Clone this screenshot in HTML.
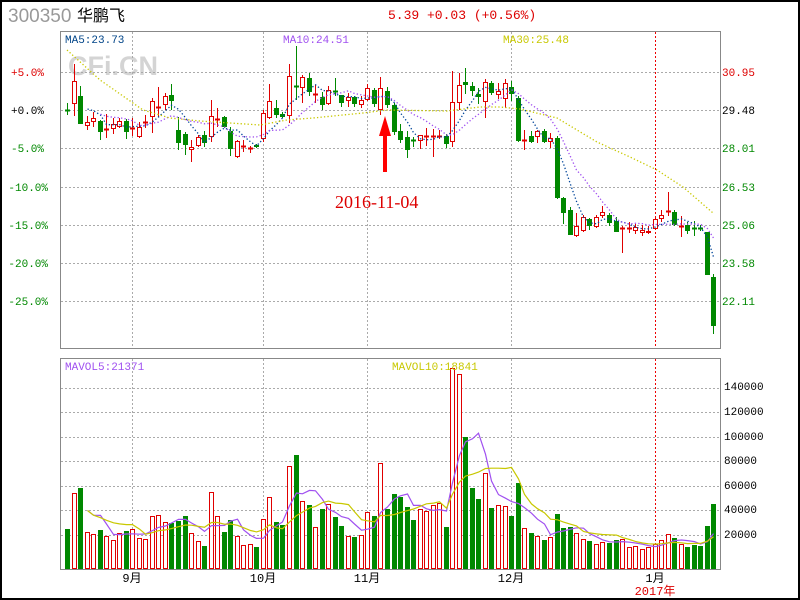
<!DOCTYPE html>
<html><head><meta charset="utf-8"><style>
html,body{margin:0;padding:0;background:#fff;}
#w{position:relative;width:800px;height:600px;overflow:hidden;}
svg text{font-family:"Liberation Mono","WenQuanYi Zen Hei",monospace;}
</style></head><body><div id="w">
<svg id="s" width="800" height="600" xmlns="http://www.w3.org/2000/svg">
<rect x="0" y="0" width="800" height="600" fill="#fff"/>
<rect x="1" y="1" width="798" height="598" fill="none" stroke="#000" stroke-width="2"/>
<text x="8" y="22" font-size="19" fill="#999" style="font-family:'Liberation Sans',sans-serif">300350</text>
<text x="77" y="21" font-size="16" fill="#000" style="font-family:'Liberation Sans','WenQuanYi Zen Hei',sans-serif">华鹏飞</text>
<text x="388" y="19" font-size="13" fill="#d00">5.39 +0.03 (+0.56%)</text>
<text x="68" y="75" font-size="27" font-weight="bold" fill="#d4d4d4" style="font-family:'Liberation Sans',sans-serif">CFi.CN</text>
<g id="grid"></g>
<rect x="60.5" y="31.5" width="660" height="317" fill="none" stroke="#888"/>
<rect x="60.5" y="358.5" width="660" height="211" fill="none" stroke="#888"/>
<g id="chart"></g>
<text x="65" y="43" font-size="11" fill="#004488">MA5:23.73</text>
<text x="283" y="43" font-size="11" fill="#a050f0">MA10:24.51</text>
<text x="503" y="43" font-size="11" fill="#c8c800">MA30:25.48</text>
<text x="65" y="370" font-size="11" fill="#a050f0">MAVOL5:21371</text>
<text x="392" y="370" font-size="11" fill="#c8c800">MAVOL10:18841</text>
<g font-size="11" text-anchor="end">
<text x="44" y="76" fill="#d00">+5.0%</text>
<text x="44" y="114" fill="#000">+0.0%</text>
<text x="44" y="152" fill="#080">-5.0%</text>
<text x="48" y="191" fill="#080">-10.0%</text>
<text x="48" y="229" fill="#080">-15.0%</text>
<text x="48" y="267" fill="#080">-20.0%</text>
<text x="48" y="305" fill="#080">-25.0%</text>
</g>
<g font-size="11">
<text x="722" y="76" fill="#d00">30.95</text>
<text x="722" y="114" fill="#000">29.48</text>
<text x="722" y="152" fill="#080">28.01</text>
<text x="722" y="191" fill="#080">26.53</text>
<text x="722" y="229" fill="#080">25.06</text>
<text x="722" y="267" fill="#080">23.58</text>
<text x="722" y="305" fill="#080">22.11</text>
<text x="724" y="390" fill="#000">140000</text>
<text x="724" y="415" fill="#000">120000</text>
<text x="724" y="440" fill="#000">100000</text>
<text x="724" y="464" fill="#000">80000</text>
<text x="724" y="489" fill="#000">60000</text>
<text x="724" y="513" fill="#000">40000</text>
<text x="724" y="538" fill="#000">20000</text>
</g>
<g font-size="12" text-anchor="middle" style="font-family:'Liberation Sans','WenQuanYi Zen Hei',sans-serif">
<text x="132" y="582">9月</text>
<text x="263" y="582">10月</text>
<text x="367" y="582">11月</text>
<text x="511" y="582">12月</text>
<text x="655" y="582">1月</text>
<text x="655" y="595" fill="#d00">2017年</text>
</g>
<path d="M385 172 L385 132" stroke="#f00" stroke-width="4"/>
<path d="M385 116 L379 136 L391 136 Z" fill="#f00"/>
<text x="335" y="208" font-size="18" fill="#d00" style="font-family:'Liberation Serif',serif">2016-11-04</text>
</svg>
<script>
var C=[[110,110,103,115],[103,81,64,116],[96,123,86,123],[125,122,116,130],[121,118,112,127],[121,131,120,140],[129,129,114,138],[128,124,118,134],[126,121,118,128],[121,131,119,139],[128,128,118,136],[136,127,122,138],[122,122,115,128],[116,101,98,133],[107,107,87,117],[104,96,93,110],[95,100,84,110],[130,142,117,150],[134,144,132,155],[149,147,140,162],[145,137,135,147],[135,142,131,147],[136,116,100,142],[119,119,108,127],[117,126,116,128],[131,148,127,156],[156,141,140,158],[146,146,140,152],[148,148,146,153],[145,146,144,148],[138,113,110,142],[117,101,84,119],[108,114,100,118],[114,116,112,118],[115,76,64,123],[86,86,46,100],[87,77,75,103],[78,91,73,96],[94,94,85,103],[97,104,92,110],[103,90,86,105],[91,91,78,96],[95,102,95,107],[100,97,93,107],[97,103,96,107],[104,100,96,108],[99,88,84,101],[90,103,88,107],[109,88,77,115],[91,104,87,108],[105,131,103,135],[131,139,124,143],[137,149,131,158],[140,140,137,147],[140,135,135,149],[136,136,128,146],[136,136,129,157],[136,136,130,139],[136,143,134,148],[141,102,71,147],[102,85,73,110],[82,84,68,94],[86,90,82,96],[94,96,88,104],[101,82,79,118],[83,92,81,95],[94,91,83,99],[98,83,79,108],[87,93,81,101],[98,140,96,142],[140,140,130,150],[136,141,131,143],[136,131,130,143],[131,141,129,143],[141,138,133,148],[138,197,136,199],[198,212,197,224],[210,234,207,235],[235,226,213,237],[230,217,215,232],[219,225,218,230],[226,217,215,228],[215,212,206,218],[215,222,213,226],[221,231,217,232],[228,228,226,253],[228,228,222,233],[230,227,223,234],[232,230,225,236],[232,231,226,234],[228,219,218,229],[218,215,210,222],[211,211,192,216],[212,224,210,226],[226,226,216,237],[225,230,222,234],[228,228,221,236],[228,228,225,231],[232,274,232,274],[277,325,274,334]];
var V=[529,493,488,532,534,530,536,540,533,531,529,538,539,516,515,522,523,521,516,533,541,546,492,516,532,520,536,545,544,547,519,497,522,525,466,455,501,505,527,509,504,517,526,536,537,535,512,516,463,509,494,497,507,520,509,511,505,503,527,368,374,437,488,499,473,508,505,506,516,483,528,533,536,540,537,514,528,527,533,539,541,544,542,543,540,539,547,546,549,547,544,540,534,538,544,547,545,546,526,504];
var NS="http://www.w3.org/2000/svg",ch=document.getElementById('chart'),gr=document.getElementById('grid');
function el(t,a,p){var e=document.createElementNS(NS,t);for(var k in a)e.setAttribute(k,a[k]);(p||ch).appendChild(e);return e;}
[72,110,148,187,225,263,301].forEach(function(y){el('line',{x1:61,x2:720,y1:y+.5,y2:y+.5,stroke:'#aaa','stroke-dasharray':'2,2'},gr);});
[388,412,437,461,486,510,535].forEach(function(y){el('line',{x1:61,x2:720,y1:y+.5,y2:y+.5,stroke:'#aaa','stroke-dasharray':'2,2'},gr);});
[132,263,367,511].forEach(function(x){el('line',{x1:x+.5,x2:x+.5,y1:32,y2:348,stroke:'#aaa','stroke-dasharray':'2,2'},gr);el('line',{x1:x+.5,x2:x+.5,y1:359,y2:569,stroke:'#aaa','stroke-dasharray':'2,2'},gr);});
el('line',{x1:655.5,x2:655.5,y1:32,y2:348,stroke:'#e00','stroke-dasharray':'2,2'},gr);
el('line',{x1:655.5,x2:655.5,y1:359,y2:569,stroke:'#e00','stroke-dasharray':'2,2'},gr);
var R='#e00000',G='#008800';
function X(i){return Math.round(67+6.53*i);}
var cl=[];
C.forEach(function(c,i){var x=X(i),o=c[0],cc=c[1],red=cc<o||(cc==o&&i!=0&&i!=53&&i!=41&&i!=35&&!(i>=95&&i<=97)&&i!=29);
 var col=red?R:G;cl.push(cc);
 var t=Math.min(o,cc),b=Math.max(o,cc);
 el('line',{x1:x+.5,x2:x+.5,y1:c[2],y2:c[3],stroke:col});
 if(b-t<1){el('line',{x1:x-2,x2:x+3,y1:t+.5,y2:t+.5,stroke:col,'stroke-width':2});}
 else if(red)el('rect',{x:x-1.5,y:t+.5,width:4,height:b-t,fill:'#fff',stroke:col});
 else el('rect',{x:x-2,y:t,width:5,height:b-t+1,fill:col});
 var vt=V[i];
 if(red)el('rect',{x:x-1.5,y:vt+.5,width:4,height:568-vt,fill:'#fff',stroke:col});
 else el('rect',{x:x-2,y:vt,width:5,height:569-vt,fill:col});
});
function ma(arr,n,base){var p=[];for(var i=0;i<arr.length;i++){var s=0,k=0;for(var j=Math.max(0,i-n+1);j<=i;j++){s+=arr[j]-base;k++;}p.push([X(i)+.5,(base+s/k).toFixed(1)]);}return p;}
function pl(p,col,d,w){el('polyline',{points:p.map(function(a){return a.join(',')}).join(' '),fill:'none',stroke:col,'stroke-width':w||1.3,'stroke-dasharray':d||''});}
pl(ma(cl,5,0).slice(3),'#004499','1.3,2.2');
pl(ma(cl,10,0).slice(5),'#a050f0','1.3,2.2');
pl([[67,50],[100,80],[143,110],[170,118],[200,121],[260,125],[287,120],[313,118],[363,113],[387,110],[447,111],[480,107],[500,107],[520,109],[557,118],[597,142],[630,157],[657,170],[683,187],[713,213]],'#c8c800','1.3,2.2');
pl(ma(V,5,569).slice(3),'#a050f0','',1.2);
pl(ma(V,10,569).slice(3),'#c8c800','',1.2);
</script>
</div></body></html>
